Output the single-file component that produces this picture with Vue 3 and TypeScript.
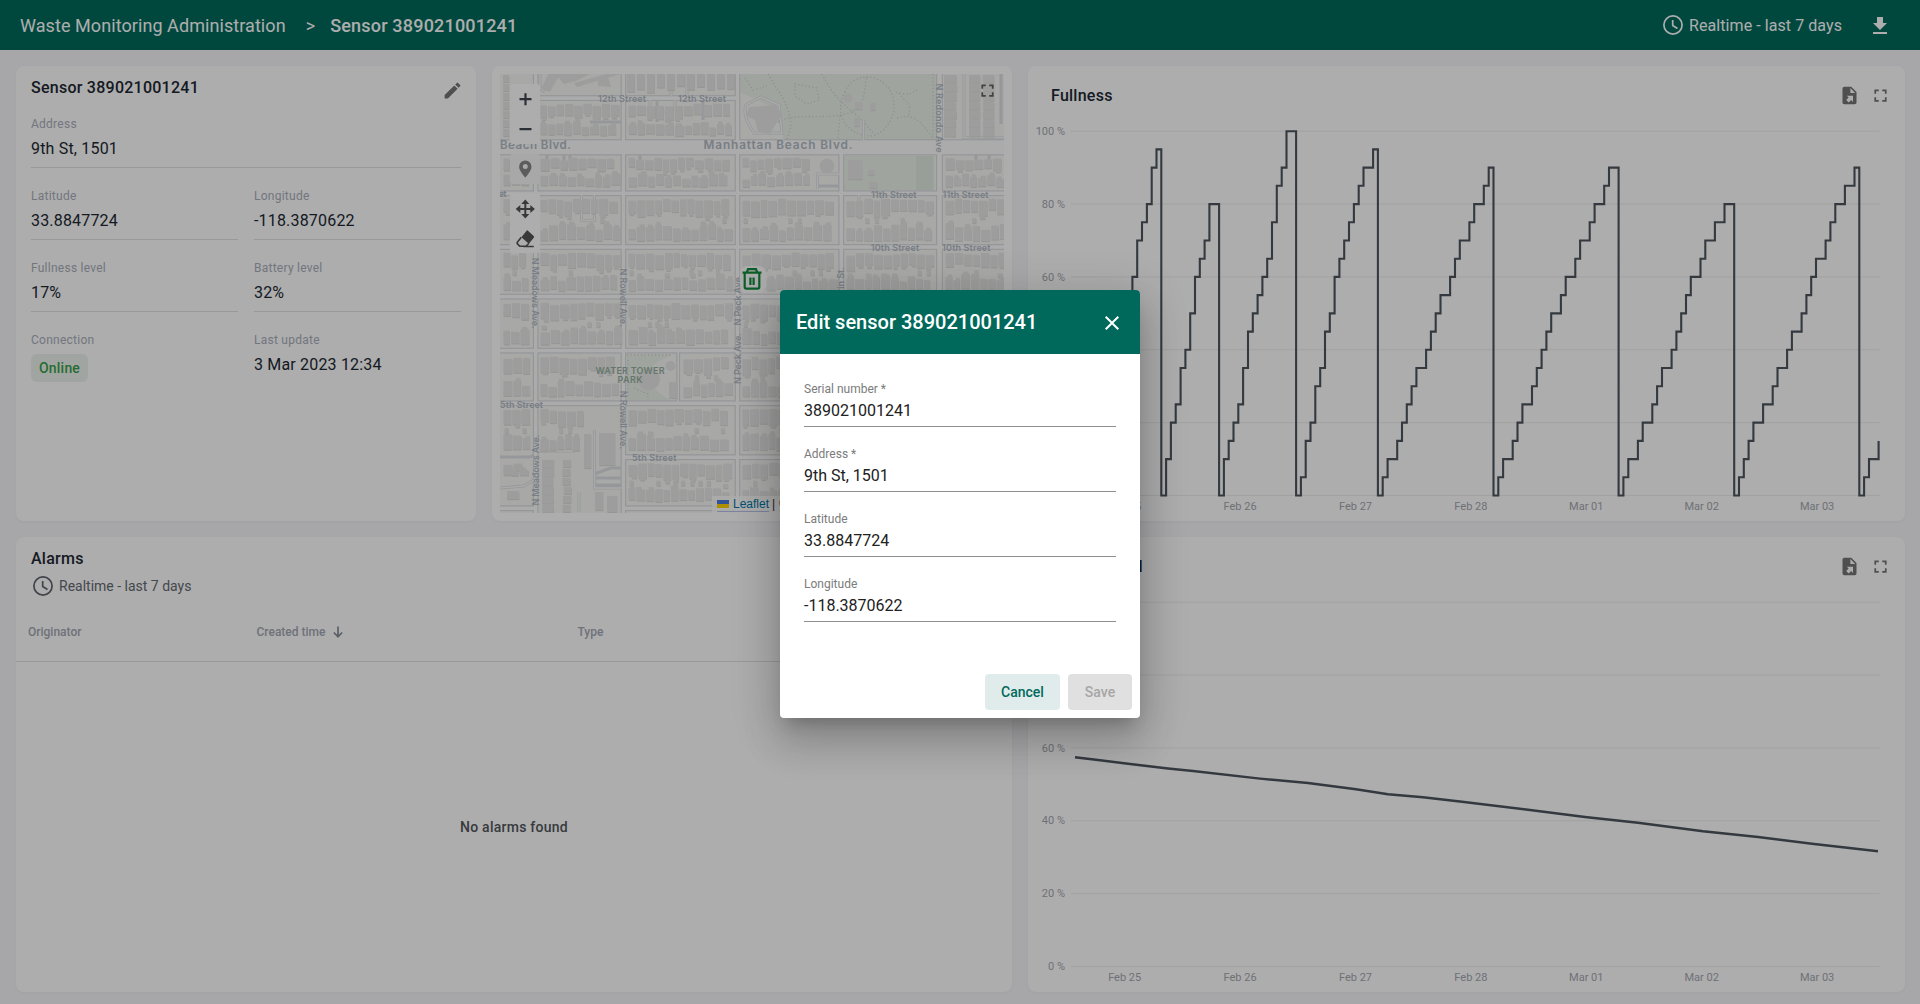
<script setup lang="ts">
interface Block { x: number; y: number; w: number; h: number }
interface Shape { x: number; y: number; w: number; h: number }
interface StreetLabel { text: string; x: number; y: number; len: number; size: number; rot: number }

/* ---------- charts ---------- */
const TICK = 4.814
const X0 = 47
const Y0 = 371.5
const UNIT = 3.643

// Hourly fullness readings, one row per emptying cycle.
const cycles: number[][] = [
  [0, 5, 5, 10, 15, 20, 25, 30, 35, 40, 50, 55, 60, 70, 75, 80, 90, 95],
  [0, 10, 20, 25, 35, 40, 50, 60, 65, 70, 80, 80],
  [0, 10, 15, 20, 25, 35, 45, 50, 55, 60, 65, 75, 85, 90, 100, 100],
  [0, 5, 15, 20, 30, 35, 45, 50, 60, 65, 70, 75, 80, 85, 90, 90, 95],
  [0, 5, 10, 10, 15, 20, 25, 30, 35, 35, 40, 45, 50, 55, 55, 60, 65, 70, 70, 75, 80, 80, 85, 90],
  [0, 5, 10, 10, 15, 20, 25, 25, 30, 35, 40, 45, 50, 50, 55, 60, 60, 65, 70, 70, 75, 80, 80, 85, 90, 90],
  [0, 5, 10, 10, 15, 20, 20, 25, 30, 35, 35, 40, 45, 50, 55, 60, 60, 65, 70, 70, 75, 75, 80, 80],
  [0, 5, 10, 15, 20, 20, 25, 25, 30, 35, 35, 40, 45, 45, 50, 55, 60, 65, 65, 70, 75, 80, 80, 85, 85, 90],
  [0, 5, 10, 10, 15],
]
const levels = cycles.flat()
const fullnessPath = levels
  .map((v, i) => {
    const x = (X0 - 0.35 + i * TICK).toFixed(1)
    const y = (Y0 - v * UNIT).toFixed(1)
    return i === 0 ? `M${x} ${y}` : `H${x}V${y}`
  })
  .join('')

const batteryPoints = '47,162.3 70,165 98,168.5 140,173.500 165,176 232,183.6 280,188 328,194.3 360,199.3 395,202.3 434,206.8 500,214.8 557,222 610,227.7 675,236.3 730,242 784,248.7 850,256.3'

const yTicks = [100, 80, 60, 40, 20, 0]
const days = ['Feb 25', 'Feb 26', 'Feb 27', 'Feb 28', 'Mar 01', 'Mar 02', 'Mar 03']
const charts = [
  { title: 'Fullness', kind: 'steps' },
  { title: 'Battery level', kind: 'line' },
]

/* ---------- map ---------- */
let seed = 7
const rnd = (): number => {
  seed = (seed * 16807) % 2147483647
  return seed / 2147483647
}

const blocks: Block[] = [
  { x: 500, y: 154, w: 34, h: 37 }, { x: 537, y: 154, w: 85, h: 37 }, { x: 625, y: 154, w: 111, h: 37 }, { x: 739, y: 154, w: 76, h: 37 }, { x: 942, y: 154, w: 66, h: 37 },
  { x: 500, y: 195, w: 34, h: 50 }, { x: 537, y: 195, w: 85, h: 50 }, { x: 625, y: 195, w: 111, h: 50 }, { x: 739, y: 195, w: 100, h: 50 }, { x: 843, y: 195, w: 94, h: 50 }, { x: 942, y: 195, w: 66, h: 50 },
  { x: 500, y: 249, w: 34, h: 46 }, { x: 537, y: 249, w: 85, h: 46 }, { x: 625, y: 249, w: 111, h: 46 }, { x: 739, y: 249, w: 100, h: 46 }, { x: 843, y: 249, w: 94, h: 46 }, { x: 942, y: 249, w: 66, h: 46 },
  { x: 500, y: 299, w: 34, h: 50 }, { x: 537, y: 299, w: 85, h: 50 }, { x: 625, y: 299, w: 111, h: 50 }, { x: 739, y: 299, w: 50, h: 50 },
  { x: 500, y: 353, w: 34, h: 48 }, { x: 537, y: 353, w: 85, h: 48 }, { x: 680, y: 353, w: 56, h: 48 }, { x: 739, y: 353, w: 50, h: 48 },
  { x: 500, y: 405, w: 34, h: 50 }, { x: 537, y: 405, w: 50, h: 50 }, { x: 625, y: 405, w: 111, h: 50 }, { x: 739, y: 405, w: 50, h: 50 },
  { x: 500, y: 459, w: 30, h: 22 }, { x: 625, y: 459, w: 111, h: 47 }, { x: 739, y: 459, w: 50, h: 47 },
  { x: 537, y: 100, w: 85, h: 40 }, { x: 625, y: 100, w: 111, h: 40 },
]

const houses: Shape[] = []
for (const b of blocks) {
  let x = b.x + 3.5
  while (x < b.x + b.w - 8) {
    const w = 6 + rnd() * 3
    const h = b.h * (0.22 + rnd() * 0.12)
    const y = b.y + 3.5 + rnd() * 3
    houses.push({ x, y, w, h })
    if (rnd() > 0.6) houses.push({ x: x + rnd() * 3, y: y + h, w: w * 0.6, h: 1.5 + rnd() * 2 })
    if (b.h > 44 && rnd() > 0.8) houses.push({ x: x + 1, y: b.y + b.h * 0.46, w: 4, h: 5 })
    x += w + 1.3
  }
  x = b.x + 3.5
  while (x < b.x + b.w - 8) {
    const w = 6 + rnd() * 3
    const h = b.h * (0.2 + rnd() * 0.12)
    const y = b.y + b.h - h - 4 - rnd() * 2.5
    houses.push({ x, y, w, h })
    if (rnd() > 0.6) houses.push({ x: x + rnd() * 3, y: y - 2.5, w: w * 0.6, h: 4 })
    if (b.h > 44 && rnd() > 0.85) houses.push({ x: x + 1, y: b.y + b.h * 0.53, w: 5, h: 4 })
    x += w + 1.3
  }
}
for (let x = 627; x < 732; x += 10) houses.push({ x, y: 74, w: 7.5, h: 12 + rnd() * 7 })
for (let y = 75; y < 132; y += 9) {
  houses.push({ x: 503, y, w: 6, h: 7 }, { x: 944, y, w: 11 + rnd() * 2, h: 7.5 })
  houses.push({ x: 969, y, w: 11, h: 7.5 }, { x: 983, y, w: 11, h: 7.5 })
}
for (let y = 460; y < 508; y += 9) {
  houses.push({ x: 542, y, w: 10 + rnd() * 3, h: 7.5 }, { x: 561 + rnd() * 3, y, w: 8, h: 7 })
}
houses.push(
  { x: 848, y: 160, w: 14, h: 19 }, { x: 868, y: 170, w: 6, h: 5 }, { x: 869, y: 182, w: 8, h: 6 },
  { x: 855, y: 102, w: 7, h: 7 }, { x: 870, y: 103, w: 5, h: 7 }, { x: 854, y: 118, w: 5, h: 8 },
  { x: 599, y: 433, w: 16, h: 32 }, { x: 584, y: 434, w: 7, h: 34 }, { x: 595, y: 492, w: 8, h: 18 }, { x: 607, y: 496, w: 10, h: 16 },
  { x: 507, y: 491, w: 12, h: 8 }, { x: 669, y: 382, w: 8, h: 16 },
)

const streetRects: Shape[] = [
  { x: 534, y: 66, w: 3.4, h: 460 }, { x: 621.7, y: 66, w: 3.4, h: 460 }, { x: 735.8, y: 66, w: 3.4, h: 460 },
  { x: 839.5, y: 154, w: 3.6, h: 370 }, { x: 937.2, y: 66, w: 4.6, h: 460 },
  { x: 534, y: 96.3, w: 203, h: 3.6 }, { x: 490, y: 140.3, w: 530, h: 14 },
  { x: 490, y: 191.5, w: 530, h: 3.6 }, { x: 490, y: 245.2, w: 530, h: 3.6 },
  { x: 490, y: 294.8, w: 530, h: 3.6 }, { x: 490, y: 348.8, w: 530, h: 3.6 },
  { x: 490, y: 401.5, w: 530, h: 3.6 }, { x: 623, y: 455.4, w: 390, h: 3.6 },
  { x: 623, y: 506.5, w: 390, h: 3.6 }, { x: 490, y: 506.5, w: 44, h: 3.6 },
  { x: 677.4, y: 352, w: 1.6, h: 50 },
]

const labels: StreetLabel[] = [
  { text: '12th Street', x: 598, y: 102, len: 48, size: 9, rot: 0 },
  { text: '12th Street', x: 678, y: 102, len: 48, size: 9, rot: 0 },
  { text: 'Beach Blvd.', x: 500, y: 149.4, len: 71, size: 11.6, rot: 0 },
  { text: 'Manhattan Beach Blvd.', x: 703.5, y: 149.4, len: 149, size: 11.8, rot: 0 },
  { text: '11th Street', x: 871, y: 198, len: 45.5, size: 9, rot: 0 },
  { text: '11th Street', x: 942.5, y: 198, len: 46, size: 9, rot: 0 },
  { text: '10th Street', x: 870.7, y: 251, len: 48.5, size: 9, rot: 0 },
  { text: '10th Street', x: 942, y: 251, len: 48.5, size: 9, rot: 0 },
  { text: 'et', x: 498.5, y: 196.8, len: 8, size: 9, rot: 0 },
  { text: '5th Street', x: 500, y: 407.6, len: 43, size: 9, rot: 0 },
  { text: '5th Street', x: 632, y: 461, len: 44.5, size: 9, rot: 0 },
  { text: 'N Redondo Ave', x: 936, y: 83.5, len: 69, size: 9, rot: 90 },
  { text: 'N Meadows Ave.', x: 532, y: 257.7, len: 71, size: 9, rot: 90 },
  { text: 'N Rowell Ave.', x: 620, y: 268.5, len: 58.5, size: 9, rot: 90 },
  { text: 'N Rowell Ave.', x: 620, y: 390.7, len: 58.5, size: 9, rot: 90 },
  { text: 'N Meadows Ave.', x: 539.4, y: 505.5, len: 71, size: 9, rot: -90 },
  { text: 'N Peck Ave.', x: 740.8, y: 384, len: 51, size: 9, rot: -90 },
  { text: 'N Peck Ave.', x: 740.8, y: 325.5, len: 51, size: 9, rot: -90 },
  { text: 'Herrin St.', x: 844.4, y: 308, len: 41, size: 9, rot: -90 },
]

/* ---------- form ---------- */
const fields = [
  { label: 'Serial number *', value: '389021001241' },
  { label: 'Address *', value: '9th St, 1501' },
  { label: 'Latitude', value: '33.8847724' },
  { label: 'Longitude', value: '-118.3870622' },
]
</script>

<template>
  <div class="page">
    <header class="topbar">
      <span class="crumb">Waste Monitoring Administration</span>
      <span class="sep">&gt;</span>
      <span class="crumb current">Sensor 389021001241</span>
      <span class="spacer"></span>
      <svg class="clock" width="24" height="24" viewBox="0 0 24 24"><circle cx="12" cy="12" r="9.1" /><path d="M11.7 7v5.6l4.8 2.9" /></svg>
      <span class="range">Realtime - last 7 days</span>
      <svg class="download" width="24" height="24" viewBox="0 0 24 24"><path d="M19 9h-4V3H9v6H5l7 7 7-7zM5 18v2h14v-2z" /></svg>
    </header>

    <main class="board">
      <div class="left">
        <div class="top-row">
          <section class="card info">
            <div class="info-head">
              <h2>Sensor 389021001241</h2>
              <svg width="21" height="21" viewBox="0 0 24 24"><path d="M3 17.25V21h3.75L17.81 9.94l-3.75-3.75L3 17.25zM20.71 7.04a1 1 0 0 0 0-1.41l-2.34-2.34a1 1 0 0 0-1.41 0l-1.83 1.83 3.75 3.75 1.83-1.83z" /></svg>
            </div>
            <div class="cells">
              <div class="cell wide"><label>Address</label><p>9th St, 1501</p></div>
              <div class="cell"><label>Latitude</label><p>33.8847724</p></div>
              <div class="cell"><label>Longitude</label><p>-118.3870622</p></div>
              <div class="cell"><label>Fullness level</label><p>17%</p></div>
              <div class="cell"><label>Battery level</label><p>32%</p></div>
              <div class="cell last"><label>Connection</label><span class="pill">Online</span></div>
              <div class="cell last"><label>Last update</label><p>3 Mar 2023 12:34</p></div>
            </div>
          </section>

          <section class="card map-card">
            <div class="map">
              <svg class="tiles" width="504" height="439" viewBox="500 74 504 439">
                <rect x="500" y="74" width="504" height="439" fill="#f8f8f5" />
                <path d="M739.5 74H936V140H784L775 108L739.5 92Z" fill="#eaf2eb" />
                <rect x="844" y="156" width="91" height="34" fill="#eaf2eb" />
                <rect x="916" y="156" width="17" height="34" fill="#e0e9e1" />
                <path d="M627 355H672C660 360 646 366 648 380C652 390 664 396 670 400H627Z" fill="#eaf2eb" />
                <g class="trails">
                  <path d="M745 78l8 12 14-4M768 74c10 18 22 30 23 52l-4 14M795 84l22 4 2 12-12 4-12-8zM822 74c10 20 20 30 36 42l18 20M778 122c20-10 40-2 68-8 24-8 16-30 22-38M845 92c8-20 35-20 46 0 10 22-6 42-20 44-24 0-38-22-26-44M896 92c10 4 18 2 22-4M897 118c20-6 26 8 36 20M933 74v64M840 116l-2 24M899 93c6 10 14 8 9 24" />
                  <path d="M627 355h45M628 360v36M634 388l14 6v6" />
                </g>
                <g class="casing"><rect v-for="(s, i) in streetRects" :key="i" :x="s.x" :y="s.y" :width="s.w" :height="s.h" /></g>
                <g class="minor">
                  <path d="M581.5 195v25.500h13V195M817.500 189v-15h24M817.500 186h22v-10M964 74v63.500h44M1001 74v50M863.500 140v-20M594.500 430v58h27M594.500 474l16-6h11M594.500 478h27M595 485h27M537 451h38M500 457h30l4-2M500 488l24-2 10-6M579 512v-20M675 100v12h-14M650 100v18M657 100v22M703 100v20M687 74v22M671 74v22M590 122h31M640 155v11M547 155v14M564 155v14M570 155v12M976 155v15M989 155v12M859 195v19M540 74v14l5 4M746 105c-4 10 4 22 8 28h28l-3-28-18-8z" />
                </g>
                <g class="minor inner">
                  <path d="M581.500 195v25.500h13V195M817.500 189v-15h24M964 74v63.500h44M863.500 140v-20M594.500 430v58h27M537 451h38M579 512v-20M675 100v12h-14M650 100v18M687 74v22M671 74v22M500 488l24-2 10-6M540 74v14l5 4M859 195v19M746 105c-4 10 4 22 8 28h28l-3-28-18-8z" />
                </g>
                <g class="street"><rect v-for="(s, i) in streetRects" :key="i" :x="s.x" :y="s.y" :width="s.w" :height="s.h" /></g>
                <g class="shade"><rect v-for="(s, i) in houses" :key="i" :x="s.x + 0.4" :y="s.y + 1.2" :width="s.w" :height="s.h" /></g>
                <g class="house">
                  <rect v-for="(s, i) in houses" :key="i" :x="s.x" :y="s.y" :width="s.w" :height="s.h" />
                  <path d="M548 74h12l-10 18-9-3zM555 74h35l-14 7-12 3zM574 83l32-9h15l-44 13zM598 79l10-2 3 10-13-1zM749 107l27-2 7 10-7 9-6 10-12-2-3-12-9-4z" />
                  <circle cx="827" cy="166" r="7.500" /><circle cx="848" cy="98" r="4.500" /><circle cx="649" cy="379" r="11" /><circle cx="670.500" cy="366" r="5" />
                </g>
                <text
                  v-for="(l, i) in labels" :key="i" class="road-name" :font-size="l.size" :textLength="l.len"
                  :transform="`translate(${l.x} ${l.y}) rotate(${l.rot})`"
                >{{ l.text }}</text>
                <text class="park-name" x="595.500" y="373.500" textLength="69">WATER TOWER</text>
                <text class="park-name" x="617.500" y="383.300" textLength="25">PARK</text>
                <rect x="740" y="266" width="26" height="27" rx="7" fill="#fff" fill-opacity=".85" />
                <g class="bin">
                  <path d="M742.500 272.600h19M747 271.800l1-2.700h8l1 2.700M744.700 273v14q0 1.700 1.700 1.700h11.200q1.700 0 1.700-1.700v-14M750.400 277.400v7.500M753.600 277.400v7.500" />
                </g>
              </svg>

              <div class="tools">
                <div class="bar two">
                  <svg width="30" height="30" viewBox="0 0 30 30"><path d="M9.500 15.200h12M15.500 9.200v12" class="bold" /></svg>
                  <svg width="30" height="30" viewBox="0 0 30 30"><path d="M9.500 15.200h12" class="bold" /></svg>
                </div>
                <div class="bar one">
                  <svg width="30" height="30" viewBox="0 0 30 30"><path fill="#888" fill-rule="evenodd" d="M15.300 6.500a6.200 6.200 0 0 0-6.200 6.200c0 4.300 6.200 10.800 6.200 10.800s6.200-6.500 6.200-10.800A6.200 6.200 0 0 0 15.300 6.500zm0 8.600a2.500 2.500 0 1 1 0-5 2.500 2.500 0 0 1 0 5z" /></svg>
                </div>
                <div class="bar two last">
                  <svg width="30" height="30" viewBox="0 0 30 30"><path fill="#545454" d="M15 5.400l4 4.600h-3v4h4v-3l4.600 4-4.600 4v-3h-4v4h3l-4 4.600-4-4.600h3v-4h-4v3l-4.600-4 4.600-4v3h4v-4h-3z" /></svg>
                  <svg width="30" height="30" viewBox="0 0 30 30"><path fill="#545454" d="M17.400 6.600l6 5.300q.9.900.1 1.900l-5 6-7.400-6.500 5-6.400q.6-.9 1.300-.3z" /><path d="M11 13.300l-4 4.900q-.6.900.2 1.700l2.300 2.400h6l3.200-3.100M13 22.500h10.500" fill="none" stroke="#545454" stroke-width="1.600" /></svg>
                </div>
              </div>
              <svg class="map-full" width="21" height="21" viewBox="0 0 24 24"><path d="M7 14H5v5h5v-2H7v-3zm-2-4h2V7h3V5H5v5zm12 7h-3v2h5v-5h-2v3zM14 5v2h3v3h2V5h-5z" /></svg>
              <div class="credit">
                <a><svg width="12" height="8" viewBox="0 0 12 8"><path fill="#4C7BE1" d="M0 0h12v4H0z" /><path fill="#FFD500" d="M0 4h12v4H0z" /></svg> Leaflet</a><span class="pipe">|</span><span>© OpenStreetMap contributors</span>
              </div>
            </div>
          </section>
        </div>

        <section class="card alarms">
          <h2>Alarms</h2>
          <div class="window">
            <svg class="clock" width="24" height="24" viewBox="0 0 24 24"><circle cx="12" cy="12" r="9.100" /><path d="M11.700 7v5.600l4.800 2.900" /></svg>
            <span>Realtime - last 7 days</span>
          </div>
          <div class="thead">
            <span>Originator</span>
            <span>Created time <svg width="12" height="12" viewBox="0 0 12 12"><path d="M6 .5v10M1.800 6.500L6 10.700l4.200-4.200" /></svg></span>
            <span>Type</span>
          </div>
          <div class="empty">No alarms found</div>
        </section>
      </div>

      <div class="right">
        <section v-for="c in charts" :key="c.title" class="card chart">
          <div class="chart-head">
            <h2>{{ c.title }}</h2>
            <svg width="21" height="21" viewBox="0 0 24 24"><path d="M6 2a2 2 0 0 0-2 2v16a2 2 0 0 0 2 2h12a2 2 0 0 0 2-2V8l-6-6H6m7 1.500L18.500 9H13V3.500M8.930 12.220H16v7.070l-2.120-2.120L11.050 20l-2.830-2.830 2.830-2.820-2.120-2.130" /></svg>
            <svg width="21" height="21" viewBox="0 0 24 24"><path d="M7 14H5v5h5v-2H7v-3zm-2-4h2V7h3V5H5v5zm12 7h-3v2h5v-5h-2v3zM14 5v2h3v3h2V5h-5z" /></svg>
          </div>
          <svg class="plot" width="877" height="397" viewBox="0 0 877 397">
            <g v-for="t in yTicks" :key="t">
              <path class="grid" :d="`M43 ${Y0 - t * UNIT}H851.500`" />
              <text class="axis" x="37" :y="Y0 - t * UNIT + 3.600" text-anchor="end">{{ t }} %</text>
            </g>
            <text v-for="(d, i) in days" :key="d" class="axis" :x="96.700 + i * 115.400" y="386" text-anchor="middle">{{ d }}</text>
            <path v-if="c.kind === 'steps'" class="series" :d="fullnessPath" />
            <polyline v-else class="series thick" :points="batteryPoints" />
          </svg>
        </section>
      </div>
    </main>

    <div class="backdrop">
      <form class="dialog" @submit.prevent>
        <div class="dialog-head">
          <span>Edit sensor 389021001241</span>
          <svg width="24" height="24" viewBox="0 0 24 24"><path d="M19 6.410L17.590 5 12 10.590 6.410 5 5 6.410 10.590 12 5 17.590 6.410 19 12 13.410 17.590 19 19 17.590 13.410 12z" /></svg>
        </div>
        <div class="dialog-body">
          <div v-for="f in fields" :key="f.label" class="field">
            <label>{{ f.label }}</label>
            <div class="value">{{ f.value }}</div>
          </div>
        </div>
        <div class="actions">
          <button type="button" class="cancel">Cancel</button>
          <button type="button" class="save" disabled>Save</button>
        </div>
      </form>
    </div>
  </div>
</template>

<style>
body { margin: 0; overflow: hidden; }
</style>

<style scoped>
.page { box-sizing: border-box; width: 1920px; height: 1004px; background: #f6f6f9; font-family: Roboto, "Liberation Sans", sans-serif; color: #212833; display: flex; flex-direction: column; overflow: hidden; }
.page * { box-sizing: border-box; }
svg { display: block; flex: none; }
h2, p { margin: 0; }
h2 { font-size: 16px; font-weight: 500; letter-spacing: .25px; }

.topbar { height: 50px; flex: none; background: #00695c; color: #fff; display: flex; align-items: center; padding: 0 28px 0 20px; font-size: 18px; }
.crumb { letter-spacing: .07px; }
.sep { margin: 0 16px 0 20px; width: 8.500px; }
.current { font-weight: 500; letter-spacing: .19px; }
.spacer { flex: 1; }
.clock { fill: none; stroke: currentColor; stroke-width: 1.700; }
.range { font-size: 16px; letter-spacing: .07px; margin: 0 26px 0 4px; }
.download { fill: #fff; margin-top: 2px; }

.board { flex: 1; display: flex; gap: 16px; padding: 16px 15px 12px 16px; }
.left { width: 996px; display: flex; flex-direction: column; gap: 16px; }
.right { width: 877px; display: flex; flex-direction: column; gap: 16px; }
.top-row { display: flex; gap: 16px; height: 455px; }
.card { background: #fff; border-radius: 8px; height: 455px; overflow: hidden; box-shadow: 0 1px 3px rgba(40, 40, 90, .04); }

.info { width: 460px; padding: 0 15px; }
.info-head { height: 42px; display: flex; justify-content: space-between; align-items: center; }
.info-head svg { fill: #757575; margin: 7px -1.500px 0 0; }
.cells { display: grid; grid-template-columns: 207px 207px; gap: 12px 16px; }
.cell { height: 60px; padding-top: 8px; border-bottom: 1px solid #e0e0e0; }
.cell.wide { grid-column: span 2; }
.cell.last { border: 0; }
.cell label { display: block; font-size: 12px; line-height: 16px; letter-spacing: .25px; color: #a9aebb; }
.cell p { font-size: 16px; line-height: 24px; margin-top: 5px; letter-spacing: .18px; }
.pill { display: inline-block; margin-top: 6px; height: 28px; line-height: 28px; padding: 0 8px; border-radius: 6px; background: #edf4ef; color: #38a049; font-size: 14px; font-weight: 500; letter-spacing: .2px; }

.map-card { width: 520px; padding: 8px; }
.map { position: relative; width: 504px; height: 439px; overflow: hidden; }
.casing rect { fill: none; stroke: #d8dade; stroke-width: 2.200; }
.street rect { fill: #fcfcfc; }
.minor { fill: none; stroke: #dddfe3; stroke-width: 3; }
.minor.inner { stroke: #fafaf9; stroke-width: 1.400; }
.trails { fill: none; stroke: #d0d7d3; stroke-width: 1.300; stroke-dasharray: 1.300 2.200; }
.shade rect { fill: #dededd; }
.house { fill: #e8e8e7; }
.road-name { font-family: Inter, sans-serif; font-weight: 600; fill: #b1bac4; }
.park-name { font-family: Inter, sans-serif; font-weight: 600; font-size: 9px; fill: #96b0a1; }
.bin { fill: none; stroke: #138a3c; stroke-width: 2.200; }
.tools { position: absolute; left: 10px; top: 10px; display: flex; flex-direction: column; }
.bar { width: 30px; background: #fff; border-radius: 3px; margin-bottom: 9px; }
.bar.one { background: #f8f8f8; margin-top: 1px; }
.bar.last svg { transform: translate(.3px, 1px); }
.bold { stroke: #404851; stroke-width: 2.200; fill: none; }
.map-full { position: absolute; right: 6px; top: 6px; fill: #606060; }
.credit { position: absolute; right: 0; bottom: 0; width: 292px; height: 17px; display: flex; padding-left: 5px; font: 12px/16px "Liberation Sans", sans-serif; background: rgba(255, 255, 255, .8); white-space: nowrap; color: #333; }
.credit a { display: flex; align-items: center; gap: 4px; color: #0078a8; border-bottom: 1px solid #b9c3ea; height: 16px; }
.pipe { margin: 0 4px 0 3px; }

.alarms { display: flex; flex-direction: column; }
.alarms h2 { line-height: 24px; margin: 10px 0 0 15px; }
.window { display: flex; align-items: center; height: 24px; margin: 3px 0 0 15px; gap: 4px; font-size: 14px; color: #666a73; }
.window .clock { stroke: #5f636c; }
.thead { height: 60px; margin-top: 4px; display: grid; grid-template-columns: 228.500px 321px 1fr; padding-left: 12px; align-items: center; border-bottom: 1px solid #e0e0e0; font-size: 12px; font-weight: 500; color: #a3a8b4; }
.thead span { display: flex; align-items: center; gap: 7px; }
.thead svg { fill: none; stroke: #868d9a; stroke-width: 1.700; }
.empty { flex: 1; display: flex; align-items: center; justify-content: center; font-size: 14px; font-weight: 500; letter-spacing: .25px; color: #53565c; }

.chart-head { height: 58px; display: flex; align-items: center; padding: 0 14px 0 23px; gap: 10.500px; }
.chart-head h2 { margin-right: auto; }
.chart-head svg { fill: #757575; margin-top: 1px; }
.grid { stroke: #eeeeef; stroke-width: 1; }
.axis { font-size: 11px; fill: #a4a7b0; }
.series { fill: none; stroke: #4c555d; stroke-width: 2.100; }
.series.thick { stroke-width: 2.400; }

.backdrop { position: absolute; left: 0; top: 0; width: 1920px; height: 1004px; background: rgba(0, 0, 0, .32); display: flex; align-items: center; justify-content: center; padding-top: 4px; }
.dialog { width: 360px; height: 428px; background: #fff; border-radius: 4px; overflow: hidden; box-shadow: 0 11px 15px -7px rgba(0, 0, 0, .2), 0 24px 38px 3px rgba(0, 0, 0, .14), 0 9px 46px 8px rgba(0, 0, 0, .12); display: flex; flex-direction: column; }
.dialog-head { height: 64px; background: #00695c; color: #fff; display: flex; align-items: center; justify-content: space-between; padding: 0 16px; font-size: 20px; font-weight: 500; }
.dialog-head svg { fill: #fff; margin-top: 2px; }
.dialog-body { padding: 20px 24px 0; flex: 1; color: #212121; }
.field { height: 65px; }
.field label { display: block; font-size: 12px; line-height: 16px; padding-top: 7px; color: #7b7b7b; }
.field .value { font-size: 16px; line-height: 20px; margin-top: 1px; height: 29px; padding-top: 3px; border-bottom: 1px solid #8f8f8f; }
.actions { display: flex; justify-content: flex-end; gap: 8px; padding: 0 8px 8px; }
button { height: 36px; border: 0; border-radius: 4px; padding: 0; font: 500 14px Roboto, sans-serif; }
.cancel { width: 75px; background: #e0eceb; color: #00695c; }
.save { width: 64px; background: #e0e0e0; color: #a6a6a6; }
</style>
